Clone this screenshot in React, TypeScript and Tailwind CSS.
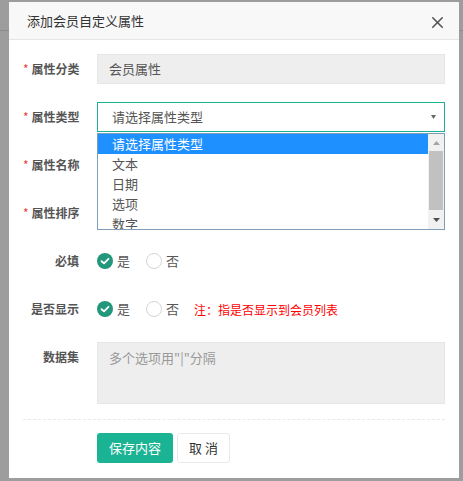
import { X } from 'lucide-react';

const font = { fontFamily: "'Noto Sans CJK SC', 'Noto Sans', sans-serif" };

const options = ['请选择属性类型', '文本', '日期', '选项', '数字'];

function Label({ text, required }: { text: string; required?: boolean }) {
  return (
    <div className="w-[56px] shrink-0 text-right text-[12px] font-bold text-[#555] leading-[30px] whitespace-nowrap">
      {required && <span className="text-[#f03c3c] mr-[3px] font-normal">*</span>}
      {text}
    </div>
  );
}

function Radio({ checked, text }: { checked?: boolean; text: string }) {
  return (
    <div className="flex items-center gap-[4px] mr-[16px]">
      {checked ? (
        <span className="w-[16px] h-[16px] rounded-full bg-[#23977b] flex items-center justify-center">
          <svg width="10" height="8" viewBox="0 0 10 8">
            <path d="M1.5 4.2 L4 6.3 L8.5 1.8" stroke="white" strokeWidth="1.8" fill="none" strokeLinecap="round" strokeLinejoin="round" />
          </svg>
        </span>
      ) : (
        <span className="w-[16px] h-[16px] rounded-full border border-[#d5d5d5] bg-white" />
      )}
      <span className="text-[13px] text-[#555]">{text}</span>
    </div>
  );
}

export default function App() {
  return (
    <div className="w-[463px] h-[481px] bg-[#9d9d9d] overflow-hidden relative" style={font}>
      {/* page behind the modal */}
      <div className="absolute top-[30px] left-0 w-full h-px bg-[#8a8a8a]" />

      <div className="relative ml-[9px] mt-[2px] w-[450px] h-[476px] bg-white">
        {/* Header */}
        <div className="h-[38px] bg-[#f8f8f8] border-b border-[#e5e5e5] flex items-center justify-between pl-[18px] pr-[12px]">
          <span className="text-[13px] text-[#333]">添加会员自定义属性</span>
          <X className="w-[19px] h-[19px] text-[#555] mt-[3px]" strokeWidth={2} />
        </div>

        {/* Body */}
        <div className="pt-[14px] px-[14px]">
          <div className="flex flex-col gap-[18px]">
            <div className="flex h-[30px]">
              <Label text="属性分类" required />
              <div className="ml-[18px] flex-1 bg-[#eeeeee] border border-[#e5e6e7] flex items-center pl-[11px] text-[13px] text-[#555]">
                会员属性
              </div>
            </div>

            <div className="flex h-[30px] relative z-10">
              <Label text="属性类型" required />
              <div className="ml-[18px] flex-1 relative">
                <div className="h-[30px] border border-[#1ab394] flex items-center justify-between pl-[14px] pr-[8px] text-[13px] text-[#555]">
                  <span>请选择属性类型</span>
                  <svg width="5" height="4" viewBox="0 0 5 4">
                    <path d="M0 0 H5 L2.5 4 Z" fill="#666" />
                  </svg>
                </div>
                <div className="absolute top-[31px] left-0 w-full h-[97px] border border-[#7f9db9] bg-white flex overflow-hidden">
                  <div className="flex-1 flex flex-col">
                    {options.map((o, i) => (
                      <div
                        key={o}
                        className={
                          'h-[20px] shrink-0 pl-[14px] text-[13px] leading-[20px] ' +
                          (i === 0 ? 'bg-[#1e90ff] text-white' : 'text-[#555]')
                        }
                      >
                        {o}
                      </div>
                    ))}
                  </div>
                  <div className="w-[16px] bg-[#f1f1f1] flex flex-col items-center">
                    <div className="h-[17px] flex items-center justify-center">
                      <svg width="7" height="4" viewBox="0 0 7 4">
                        <path d="M0 4 H7 L3.5 0 Z" fill="#a3a3a3" />
                      </svg>
                    </div>
                    <div className="w-[14px] h-[59px] bg-[#c1c1c1]" />
                    <div className="flex-1 flex items-center justify-center">
                      <svg width="7" height="4" viewBox="0 0 7 4">
                        <path d="M0 0 H7 L3.5 4 Z" fill="#505050" />
                      </svg>
                    </div>
                  </div>
                </div>
              </div>
            </div>

            <div className="flex h-[30px]">
              <Label text="属性名称" required />
              <div className="ml-[18px] flex-1 border border-[#e5e6e7]" />
            </div>

            <div className="flex h-[30px]">
              <Label text="属性排序" required />
              <div className="ml-[18px] flex-1 border border-[#e5e6e7]" />
            </div>

            <div className="flex h-[30px]">
              <Label text="必填" />
              <div className="ml-[18px] flex-1 flex items-center">
                <Radio checked text="是" />
                <Radio text="否" />
              </div>
            </div>

            <div className="flex h-[30px]">
              <Label text="是否显示" />
              <div className="ml-[18px] flex-1 flex items-center">
                <Radio checked text="是" />
                <Radio text="否" />
                <span className="text-[12px] text-[#ff0000] ml-[-1px] mt-[2px]">注：指是否显示到会员列表</span>
              </div>
            </div>

            <div className="flex">
              <Label text="数据集" />
              <div className="ml-[18px] flex-1 h-[62px] bg-[#eeeeee] border border-[#e5e6e7] pl-[11px] pt-[5px] text-[13px] leading-[20px] text-[#999]">
                多个选项用"|"分隔
              </div>
            </div>
          </div>

          <div className="mt-[15px] border-t border-dashed border-[#e7eaec]" />

          <div className="mt-[13px] ml-[74px] flex gap-[4px]">
            <button className="w-[76px] h-[30px] rounded-[3px] bg-[#1ab394] text-white text-[13px]">保存内容</button>
            <button className="w-[53px] h-[30px] rounded-[3px] bg-white border border-[#e7eaec] text-[#333] text-[13px]">取 消</button>
          </div>
        </div>
      </div>
    </div>
  );
}
